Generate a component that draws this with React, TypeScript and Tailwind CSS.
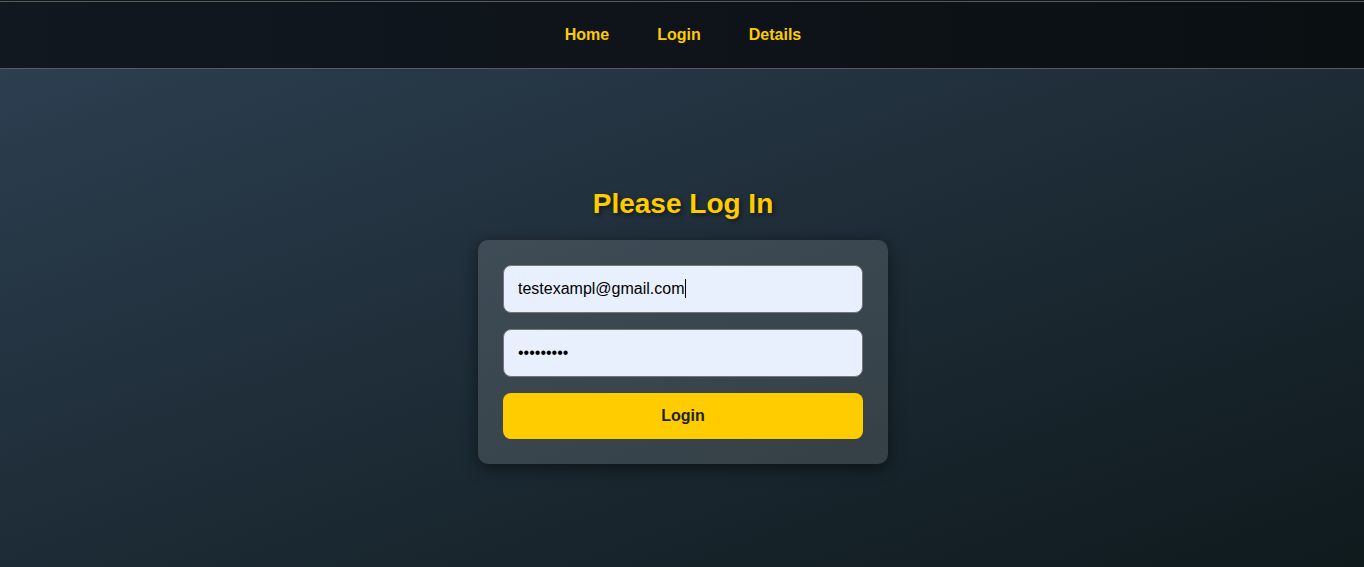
import { useState } from "react";

export default function App() {
  const [email, setEmail] = useState("testexampl@gmail.com");
  const [password, setPassword] = useState("123456789");

  return (
    <div className="min-h-[567px] flex flex-col bg-[#10161d] pt-px font-['Liberation_Sans',Arial,sans-serif]">
      <header className="h-[68px] flex items-center justify-center gap-12 pl-[2px] border-y border-[#5a5a5a] bg-gradient-to-r from-[#111820] to-[#0a0f12]">
        <a href="#" className="text-[16px] font-bold text-[#ffcc00]">
          Home
        </a>
        <a href="#" className="text-[16px] font-bold text-[#ffcc00]">
          Login
        </a>
        <a href="#" className="text-[16px] font-bold text-[#ffcc00]">
          Details
        </a>
      </header>

      <main className="flex-1 flex flex-col items-center pt-[119px] pl-[2px] bg-gradient-to-br from-[#2c3e50] to-[#0f1a1d]">
        <h1 className="text-[28px] leading-[32px] font-bold text-[#ffcc00] mb-[20px] [text-shadow:2px_2px_4px_rgba(0,0,0,0.5)]">
          Please Log In
        </h1>

        <form
          className="w-[410px] flex flex-col p-[25px] rounded-[10px] bg-white/[0.13] shadow-[0_4px_15px_rgba(0,0,0,0.5)]"
          onSubmit={(e) => e.preventDefault()}
        >
          <div className="relative mb-[16px]">
            <input
              type="email"
              value={email}
              onChange={(e) => setEmail(e.target.value)}
              className="w-full h-[48px] px-[14px] rounded-[8px] border border-[#767676] bg-[#e8f0fe] text-[16px] text-black outline-none"
            />
            <span className="absolute left-[182px] top-[14px] h-[19px] w-px bg-black" />
          </div>
          <input
            type="password"
            value={password}
            onChange={(e) => setPassword(e.target.value)}
            className="mb-[16px] h-[48px] px-[14px] rounded-[8px] border border-[#767676] bg-[#e8f0fe] text-[16px] text-black outline-none"
          />
          <button
            type="submit"
            className="h-[46px] rounded-[8px] bg-[#ffcc00] text-[16px] font-bold text-[#222]"
          >
            Login
          </button>
        </form>
      </main>
    </div>
  );
}
